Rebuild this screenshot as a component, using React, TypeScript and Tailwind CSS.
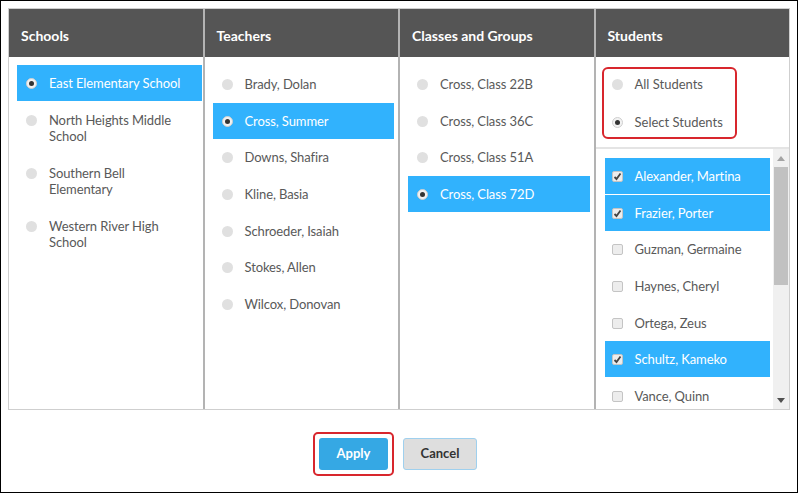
import React from 'react'

type Item = { label: string; selected?: boolean }

const schools: Item[] = [
  { label: 'East Elementary School', selected: true },
  { label: 'North Heights Middle School' },
  { label: 'Southern Bell Elementary' },
  { label: 'Western River High School' },
]

const teachers: Item[] = [
  { label: 'Brady, Dolan' },
  { label: 'Cross, Summer', selected: true },
  { label: 'Downs, Shafira' },
  { label: 'Kline, Basia' },
  { label: 'Schroeder, Isaiah' },
  { label: 'Stokes, Allen' },
  { label: 'Wilcox, Donovan' },
]

const classes: Item[] = [
  { label: 'Cross, Class 22B' },
  { label: 'Cross, Class 36C' },
  { label: 'Cross, Class 51A' },
  { label: 'Cross, Class 72D', selected: true },
]

const students: Item[] = [
  { label: 'Alexander, Martina', selected: true },
  { label: 'Frazier, Porter', selected: true },
  { label: 'Guzman, Germaine' },
  { label: 'Haynes, Cheryl' },
  { label: 'Ortega, Zeus' },
  { label: 'Schultz, Kameko', selected: true },
  { label: 'Vance, Quinn' },
]

const Radio = ({ on }: { on?: boolean }) => (
  <span
    className={
      'mt-[3px] flex h-[11px] w-[11px] shrink-0 items-center justify-center rounded-full ' +
      (on ? 'bg-[#f2f2f2] border border-[#cfcfcf]' : 'bg-[#e0e0e0]')
    }
  >
    {on && <span className="h-[5px] w-[5px] rounded-full bg-[#333]" />}
  </span>
)

const Check = ({ on }: { on?: boolean }) => (
  <span className="mt-[3px] flex h-[11px] w-[11px] shrink-0 items-center justify-center rounded-[2px] border border-[#c4c4c4] bg-[#ededed]">
    {on && (
      <svg width="9" height="9" viewBox="0 0 9 9">
        <path d="M1.5 5 L3.5 7 L7.5 1.5" stroke="#444" strokeWidth="1.8" fill="none" />
      </svg>
    )}
  </span>
)

const Row = ({ item, check, narrow }: { item: Item; check?: boolean; narrow?: boolean }) => (
  <div
    className={
      'flex gap-[12px] py-[10px] pr-1 text-[13px] leading-[16px] tracking-[-0.1px] ' +
      (check ? 'pl-[7px] ' : 'pl-[9px] ') +
      (item.selected ? 'bg-[#31b2fd] text-white' : 'text-[#595959]')
    }
  >
    {check ? <Check on={item.selected} /> : <Radio on={item.selected} />}
    <span className={narrow ? 'max-w-[138px]' : ''}>{item.label}</span>
  </div>
)

const Column = ({ title, children, last }: { title: string; children: React.ReactNode; last?: boolean }) => (
  <div className={'flex flex-1 flex-col ' + (last ? '' : 'border-r-2 border-[#b3b3b3]')}>
    <div className="flex h-[48px] shrink-0 items-center bg-[#555555] pl-[12px] pt-[4px] text-[14px] font-bold text-white">
      {title}
    </div>
    {children}
  </div>
)

export default function App() {
  return (
    <div
      className="h-[493px] w-[798px] border border-black bg-white p-[7px]"
      style={{ fontFamily: 'Lato, "Noto Sans", sans-serif' }}
    >
      <div className="flex h-[402px] border border-[#cfcfcf]">
        <Column title="Schools">
          <div className="flex flex-col gap-[1px] pl-[8px] pr-[1px] pt-[8px]">
            {schools.map((s) => (
              <Row key={s.label} item={s} narrow />
            ))}
          </div>
        </Column>
        <Column title="Teachers">
          <div className="flex flex-col gap-[0.67px] pl-[8px] pr-[4px] pt-[9px]">
            {teachers.map((s) => (
              <Row key={s.label} item={s} />
            ))}
          </div>
        </Column>
        <Column title="Classes and Groups">
          <div className="flex flex-col gap-[0.67px] pl-[8px] pr-[4px] pt-[9px]">
            {classes.map((s) => (
              <Row key={s.label} item={s} />
            ))}
          </div>
        </Column>
        <Column title="Students" last>
          <div className="px-[6px] pt-[10px] pb-[8px] border-b-2 border-[#e4e4e4]">
            <div className="flex w-[135px] flex-col gap-[21px] rounded-[6px] border-2 border-[#d8262d] py-[7px]">
              <div className="flex gap-[12px] pl-[8px] text-[13px] leading-[16.5px] text-[#595959]">
                <Radio />
                <span>All Students</span>
              </div>
              <div className="flex gap-[12px] pl-[8px] text-[13px] leading-[16.5px] text-[#595959]">
                <Radio on />
                <span>Select Students</span>
              </div>
            </div>
          </div>
          <div className="flex min-h-0 flex-1 overflow-hidden">
            <div className="flex flex-1 flex-col gap-[0.67px] pl-[9px] pr-[3px] pt-[9px]">
              {students.map((s) => (
                <Row key={s.label} item={s} check />
              ))}
            </div>
            <div className="flex w-[16px] flex-col items-center bg-[#f0f0f0]">
              <div className="flex h-[18px] w-full items-center justify-center">
                <svg width="8" height="5" viewBox="0 0 8 5">
                  <path d="M0 5 L4 0 L8 5 Z" fill="#a3a3a3" />
                </svg>
              </div>
              <div className="h-[118px] w-[14px] bg-[#c1c1c1]" />
              <div className="flex-1" />
              <div className="flex h-[17px] w-full items-center justify-center">
                <svg width="8" height="5" viewBox="0 0 8 5">
                  <path d="M0 0 L8 0 L4 5 Z" fill="#505050" />
                </svg>
              </div>
            </div>
          </div>
        </Column>
      </div>
      <div className="mr-[8px] flex items-center justify-center gap-[9px] pt-[22px]">
        <div className="rounded-[5px] border-2 border-[#d8262d] p-[4px]">
          <button className="h-[32px] w-[69px] rounded-[3px] bg-[#35a8e4] text-[13px] font-bold text-white">
            Apply
          </button>
        </div>
        <button className="h-[32px] w-[74px] rounded-[3px] border border-[#9fd0ee] bg-[#dedede] text-[13px] font-bold text-[#333]">
          Cancel
        </button>
      </div>
    </div>
  )
}
